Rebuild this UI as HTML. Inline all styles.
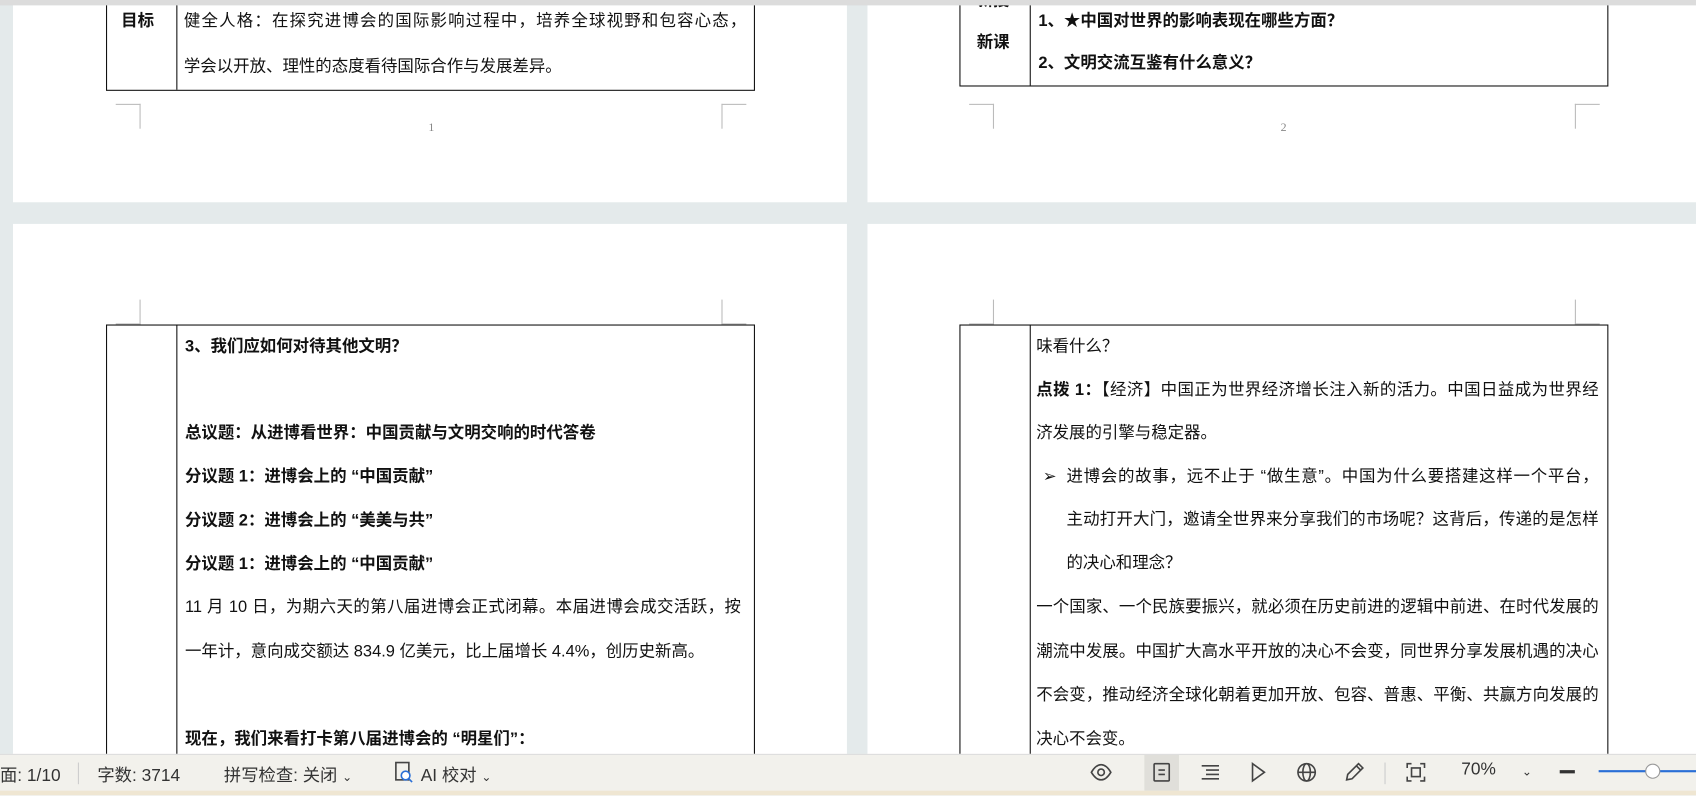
<!DOCTYPE html>
<html><head><meta charset="utf-8"><style>
html,body{margin:0;padding:0;width:1696px;height:795px;overflow:hidden;background:#e4eaeb}
#w{position:absolute;left:0;top:0;width:1568px;height:735px;transform:scale(1.08163);transform-origin:0 0;font-family:"Liberation Sans","Noto Sans CJK SC",sans-serif;color:#111}
.pg{position:absolute;background:#fff;overflow:hidden}
.b{position:absolute;border:1px solid #111}
.v{position:absolute;width:1px;background:#111}
.t{position:absolute;font-size:15.2px;white-space:nowrap;line-height:20px}
.j{white-space:normal;text-align:justify;text-align-last:justify;height:20px;overflow:hidden}
.bd{font-weight:bold}
.cm{position:absolute;border-color:#bbb;border-style:solid;border-width:0}
.pn{position:absolute;font-family:"Liberation Serif",serif;font-size:11px;color:#888}
.sb{position:absolute;left:0;top:697px;width:1568px;height:38px;background:#f2f1ec;border-top:1px solid #ddd}
.st{position:absolute;top:5px;font-size:16px;color:#333;white-space:nowrap}
.ic{position:absolute;top:5px}
</style></head><body><div id="w">
<div style="position:absolute;left:0;top:0;width:1568px;height:5px;background:#dcdcdc"></div>
<!-- page 1 -->
<div class="pg" style="left:12px;top:5px;width:771px;height:182px">
 <div class="b" style="left:86px;top:-10px;width:598px;height:87px"></div>
 <div class="v" style="left:151px;top:-5px;height:83px"></div>
 <div class="t bd" style="left:100px;top:5px">目标</div>
 <div class="t j" style="left:158px;top:5px;width:520px">健全人格：在探究进博会的国际影响过程中，培养全球视野和包容心态，</div>
 <div class="t" style="left:158px;top:47px">学会以开放、理性的态度看待国际合作与发展差异。</div>
 <div class="cm" style="left:95px;top:91px;width:22px;height:22px;border-top-width:1px;border-right-width:1px"></div>
 <div class="cm" style="left:655px;top:91px;width:22px;height:22px;border-top-width:1px;border-left-width:1px"></div>
 <div class="pn" style="left:384px;top:107px">1</div>
</div>
<!-- page 2 -->
<div class="pg" style="left:802px;top:5px;width:766px;height:182px">
 <div class="b" style="left:85px;top:-10px;width:598px;height:83px"></div>
 <div class="v" style="left:150px;top:-5px;height:79px"></div>
 <div class="t bd" style="left:101px;top:-14px">新授</div>
 <div class="t bd" style="left:101px;top:25px">新课</div>
 <div class="t bd" style="left:158px;top:5px">1、★中国对世界的影响表现在哪些方面？</div>
 <div class="t bd" style="left:158px;top:44px">2、文明交流互鉴有什么意义？</div>
 <div class="cm" style="left:94px;top:91px;width:22px;height:22px;border-top-width:1px;border-right-width:1px"></div>
 <div class="cm" style="left:654px;top:91px;width:22px;height:22px;border-top-width:1px;border-left-width:1px"></div>
 <div class="pn" style="left:382px;top:107px">2</div>
</div>
<!-- page 3 -->
<div class="pg" style="left:12px;top:207px;width:771px;height:490px">
 <div class="cm" style="left:95px;top:70px;width:22px;height:22px;border-bottom-width:1px;border-right-width:1px"></div>
 <div class="cm" style="left:655px;top:70px;width:22px;height:22px;border-bottom-width:1px;border-left-width:1px"></div>
 <div class="b" style="left:86px;top:93px;width:598px;height:420px"></div>
 <div class="v" style="left:151px;top:93px;height:400px"></div>
 <div class="t bd" style="left:159px;top:104px">3、我们应如何对待其他文明？</div>
 <div class="t bd" style="left:159px;top:184px">总议题：从进博看世界：中国贡献与文明交响的时代答卷</div>
 <div class="t bd" style="left:159px;top:224px">分议题 1：进博会上的 “中国贡献”</div>
 <div class="t bd" style="left:159px;top:265px">分议题 2：进博会上的 “美美与共”</div>
 <div class="t bd" style="left:159px;top:305px">分议题 1：进博会上的 “中国贡献”</div>
 <div class="t j" style="left:159px;top:345px;width:514px">11 月 10 日，为期六天的第八届进博会正式闭幕。本届进博会成交活跃，按</div>
 <div class="t" style="left:159px;top:386px">一年计，意向成交额达 834.9 亿美元，比上届增长 4.4%，创历史新高。</div>
 <div class="t bd" style="left:159px;top:467px">现在，我们来看打卡第八届进博会的 “明星们”：</div>
</div>
<!-- page 4 -->
<div class="pg" style="left:802px;top:207px;width:766px;height:490px">
 <div class="cm" style="left:94px;top:70px;width:22px;height:22px;border-bottom-width:1px;border-right-width:1px"></div>
 <div class="cm" style="left:654px;top:70px;width:22px;height:22px;border-bottom-width:1px;border-left-width:1px"></div>
 <div class="b" style="left:85px;top:93px;width:598px;height:420px"></div>
 <div class="v" style="left:150px;top:93px;height:400px"></div>
 <div class="t" style="left:156px;top:104px">味看什么？</div>
 <div class="t j" style="left:156px;top:144px;width:520px"><b>点拨 1：</b>【经济】中国正为世界经济增长注入新的活力。中国日益成为世界经</div>
 <div class="t" style="left:156px;top:184px">济发展的引擎与稳定器。</div>
 <div class="t" style="left:162px;top:224px">➢</div>
 <div class="t j" style="left:184px;top:224px;width:492px">进博会的故事，远不止于 “做生意”。中国为什么要搭建这样一个平台，</div>
 <div class="t j" style="left:184px;top:264px;width:492px">主动打开大门，邀请全世界来分享我们的市场呢？这背后，传递的是怎样</div>
 <div class="t" style="left:184px;top:304px">的决心和理念？</div>
 <div class="t j" style="left:156px;top:345px;width:520px">一个国家、一个民族要振兴，就必须在历史前进的逻辑中前进、在时代发展的</div>
 <div class="t j" style="left:156px;top:386px;width:520px">潮流中发展。中国扩大高水平开放的决心不会变，同世界分享发展机遇的决心</div>
 <div class="t j" style="left:156px;top:426px;width:520px">不会变，推动经济全球化朝着更加开放、包容、普惠、平衡、共赢方向发展的</div>
 <div class="t" style="left:156px;top:467px">决心不会变。</div>
</div>
<!-- status bar -->
<div class="sb">
 <div class="st" style="left:-16px">页面: 1/10</div>
 <div style="position:absolute;left:72px;top:7px;width:1px;height:20px;background:#ccc"></div>
 <div class="st" style="left:90px">字数: 3714</div>
 <div class="st" style="left:207px">拼写检查: 关闭 <span style="font-size:11px">⌄</span></div>
 <svg class="ic" style="left:364px" width="20" height="22" viewBox="0 0 20 22"><rect x="2" y="2" width="12" height="16" fill="none" stroke="#444" stroke-width="1.5"/><circle cx="11" cy="14" r="4" fill="#fff" stroke="#2a6fd6" stroke-width="1.5"/><line x1="14" y1="17" x2="17" y2="20" stroke="#2a6fd6" stroke-width="1.5"/></svg>
 <div class="st" style="left:389px">AI 校对 <span style="font-size:11px">⌄</span></div>
 <svg class="ic" style="left:1007px" width="22" height="22" viewBox="0 0 22 22" fill="none" stroke="#444" stroke-width="1.5"><path d="M2 11C5 6 8 4 11 4s6 2 9 7c-3 5-6 7-9 7s-6-2-9-7z"/><circle cx="11" cy="11" r="3"/></svg>
 <div style="position:absolute;left:1058px;top:0;width:32px;height:33px;background:#e0dfda"></div>
 <svg class="ic" style="left:1064px" width="20" height="22" viewBox="0 0 20 22" fill="none" stroke="#444" stroke-width="1.5"><rect x="3" y="3" width="14" height="16" rx="1"/><line x1="7" y1="9" x2="13" y2="9"/><line x1="7" y1="13" x2="13" y2="13"/></svg>
 <svg class="ic" style="left:1108px" width="22" height="22" viewBox="0 0 22 22" fill="none" stroke="#444" stroke-width="1.5"><path d="M3 5h16M7 9h12M7 13h12M3 17h16"/></svg>
 <svg class="ic" style="left:1153px" width="20" height="22" viewBox="0 0 20 22" fill="none" stroke="#444" stroke-width="1.5"><path d="M5 3l11 8-11 8z"/></svg>
 <svg class="ic" style="left:1197px" width="22" height="22" viewBox="0 0 22 22" fill="none" stroke="#444" stroke-width="1.5"><circle cx="11" cy="11" r="8"/><ellipse cx="11" cy="11" rx="3.5" ry="8"/><line x1="3" y1="11" x2="19" y2="11"/></svg>
 <svg class="ic" style="left:1241px" width="22" height="22" viewBox="0 0 22 22" fill="none" stroke="#444" stroke-width="1.5"><path d="M4 18l1-5L15 3l4 4L9 17z M13 5l4 4"/></svg>
 <div style="position:absolute;left:1280px;top:7px;width:1px;height:20px;background:#ccc"></div>
 <svg class="ic" style="left:1298px" width="22" height="22" viewBox="0 0 22 22" fill="none" stroke="#444" stroke-width="1.5"><path d="M3 7V3h4M15 3h4v4M19 15v4h-4M7 19H3v-4"/><rect x="7" y="7" width="8" height="8"/></svg>
 <div class="st" style="left:1351px">70%</div>
 <div class="st" style="left:1407px;font-size:11px;top:9px">⌄</div>
 <div style="position:absolute;left:1442px;top:14px;width:14px;height:3px;background:#333"></div>
 <div style="position:absolute;left:1478px;top:14px;width:90px;height:2px;background:#2a6fd6"></div>
 <div style="position:absolute;left:1521px;top:8px;width:12px;height:12px;border-radius:50%;background:#fff;border:1px solid #999"></div>
</div>
<div style="position:absolute;left:0;top:731px;width:1568px;height:4px;background:#efe6d2"></div>
</div></body></html>
